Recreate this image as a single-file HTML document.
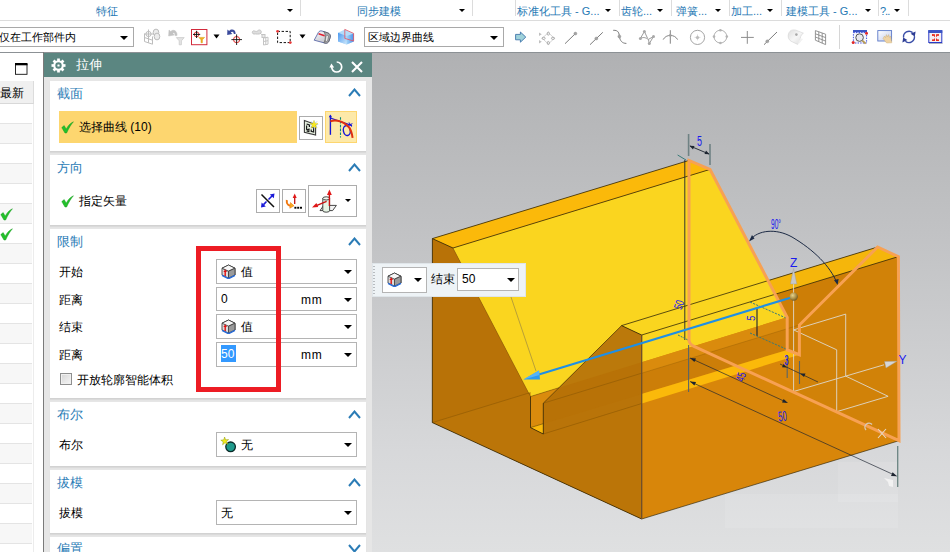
<!DOCTYPE html>
<html lang="zh">
<head>
<meta charset="utf-8">
<title>NX Extrude</title>
<style>
html,body{margin:0;padding:0;}
body{width:950px;height:552px;overflow:hidden;background:#fff;position:relative;font-family:"Liberation Sans",sans-serif;font-size:12px;color:#000;}
.abs{position:absolute;}
.t{position:absolute;white-space:nowrap;line-height:16px;height:16px;}
/* top tab strip */
#tabs{left:0;top:0;width:950px;height:20px;background:#fff;border-bottom:1px solid #dcdcdc;}
.tab{color:#2678b4;font-size:11px;}
.vd{position:absolute;top:0;width:1px;height:16px;background:#dcdcdc;}
.dd{position:absolute;width:0;height:0;border-left:4px solid transparent;border-right:4px solid transparent;border-top:4px solid #000;margin-left:-0.4px;}
.dds{position:absolute;width:0;height:0;border-left:3px solid transparent;border-right:3px solid transparent;border-top:3px solid #000;margin-left:0.2px;}
/* toolbar */
#tb{left:0;top:21px;width:950px;height:31px;background:#fff;}
.combo{position:absolute;background:#fff;border:1px solid #a9a9a9;box-sizing:border-box;}
/* viewport */
#vp{left:372px;top:52px;width:578px;height:500px;background:linear-gradient(#b0b1b3 0%,#c3c4c6 40%,#d7d8da 80%,#dfe0e1 100%);border-top:1px solid #8c9195;box-sizing:border-box;}
/* left strip */
#lp{left:0;top:53px;width:43px;height:499px;background:#fff;}
.row{position:absolute;left:0;width:32px;height:19px;border-bottom:1px solid #e4e4e4;}
/* dialog */
#dlg{left:43px;top:52px;width:329px;height:500px;background:#e6e6e6;border-left:1px solid #7a7a7a;box-sizing:border-box;}
#hdr{left:44px;top:52px;width:328px;height:25px;background:#5b8681;border-top:1px solid #8c9195;box-sizing:border-box;}
.sec{position:absolute;left:50px;width:316px;background:#fff;box-shadow:0 1px 0 #d2d2d2,0 2px 1px #dadada;}
.sl{color:#2b7cb6;font-size:13px;}
.la{letter-spacing:0;}
.btn{position:absolute;background:#fff;border:1px solid #adadad;box-sizing:border-box;}
</style>
</head>
<body>
<!-- ===== top tab strip ===== -->
<div id="tabs" class="abs">
  <span class="t tab" style="left:96px;top:2.5px;">特征</span>
  <div class="dds" style="left:286.8px;top:8.8px;"></div>
  <div class="vd" style="left:300px;"></div>
  <span class="t tab" style="left:356.5px;top:2.5px;">同步建模</span>
  <div class="dds" style="left:458.4px;top:8.8px;"></div>
  <div class="vd" style="left:472px;"></div>
  <div class="vd" style="left:515px;"></div>
  <span class="t tab" style="left:517px;top:2.5px;">标准化工具<span class="la"> - G...</span></span>
  <div class="dds" style="left:604.8px;top:8.8px;"></div>
  <div class="vd" style="left:619px;"></div>
  <span class="t tab" style="left:621px;top:2.5px;">齿轮<span class="la">...</span></span>
  <div class="dds" style="left:656.8px;top:8.8px;"></div>
  <div class="vd" style="left:671px;"></div>
  <span class="t tab" style="left:676px;top:2.5px;">弹簧<span class="la">...</span></span>
  <div class="dds" style="left:714.8px;top:8.8px;"></div>
  <div class="vd" style="left:729px;"></div>
  <span class="t tab" style="left:731px;top:2.5px;">加工<span class="la">...</span></span>
  <div class="dds" style="left:766.8px;top:8.8px;"></div>
  <div class="vd" style="left:781px;"></div>
  <span class="t tab" style="left:786px;top:2.5px;">建模工具<span class="la"> - G...</span></span>
  <div class="dds" style="left:864.8px;top:8.8px;"></div>
  <div class="vd" style="left:878px;"></div>
  <span class="t tab" style="left:880px;top:2.5px;"><span class="la" style="letter-spacing:-1px;">?..</span></span>
  <div class="dds" style="left:893.8px;top:8.8px;"></div>
  <div class="vd" style="left:908px;"></div>
</div>

<!-- ===== toolbar ===== -->
<div id="tb" class="abs"></div>
<div class="combo" style="left:-2px;top:27px;width:136px;height:20px;"></div>
<span class="t" style="left:-1.5px;top:29px;font-size:11px;">仅在工作部件内</span>
<div class="dd" style="left:120.8px;top:35.8px;"></div>
<div class="combo" style="left:364px;top:27px;width:140px;height:20px;"></div>
<span class="t" style="left:367.5px;top:29px;font-size:11px;">区域边界曲线</span>
<div class="dd" style="left:490.6px;top:35.8px;"></div>
<svg class="abs" style="left:0;top:21px;" width="950" height="31" viewBox="0 21 950 31">
<!-- 1 gray move-object -->
<g stroke="#bdbdbd" stroke-width="1" fill="none">
  <path d="M148.5 29.5 L148.5 39 M144.5 34 L153 34"/><circle cx="148.5" cy="34" r="2.6"/>
  <path d="M144.5 33.5 L144.5 41.5 L152.5 44.2 L152.5 36.5 M144.5 37.5 L152.5 40.2 M148.5 35 L148.5 42.8"/>
  <ellipse cx="156" cy="32.5" rx="2.8" ry="3.4" fill="#ececec"/><ellipse cx="157" cy="36.5" rx="2.8" ry="3.4" fill="#ececec"/>
</g>
<!-- 2 gray undo + funnel -->
<path d="M177 35.6 C177.6 30.6 172.8 28.8 170.8 31.6 L169 30 L168.6 36 L174.4 35 L172.8 33.4 C173.8 32 175.4 33 175 35.6 Z" fill="#c2c2c2" stroke="#c2c2c2" stroke-width="0.5"/>
<path d="M176.4 37.6 L184.2 37.6 L181.4 40.8 L181.4 44.8 L179.2 44.8 L179.2 40.8 Z" fill="#e4e4e4" stroke="#c6c6c6" stroke-width="0.7"/>
<!-- 3 red box w/ crosshair + funnel -->
<rect x="191.5" y="29.5" width="15.4" height="15.2" fill="#fff" stroke="#d22a3c" stroke-width="1"/>
<circle cx="196.6" cy="34.4" r="2.4" fill="none" stroke="#e02020" stroke-width="0.9"/>
<path d="M196.6 30.8 L196.6 38 M193 34.4 L200.2 34.4" stroke="#111" stroke-width="1"/>
<path d="M198.8 37.4 L204.6 37.4 L202.4 39.8 L202.4 42.8 L201 42.8 L201 39.8 Z" fill="#f0b020" stroke="#d89a10" stroke-width="0.5"/>
<path d="M213.5 34.6 L219.5 34.6 L216.5 38.4 Z" fill="#000"/>
<!-- 5 blue undo + crosshair -->
<path d="M235.6 34 C236 29.2 231 28.4 229.2 31 L227.4 29.6 L227.2 35 L232.4 34 L230.8 32.6 C231.8 31.2 233.8 31.8 233.8 34 Z" fill="#3a4a9c"/>
<circle cx="236.6" cy="39.6" r="3.1" fill="none" stroke="#e01818" stroke-width="0.9"/>
<path d="M236.6 34.4 L236.6 45 M231.4 39.6 L242 39.6" stroke="#111" stroke-width="0.9"/>
<!-- 6 gray chain/hand -->
<g stroke="#c4c4c4" stroke-width="1" fill="none">
  <path d="M252.5 31.5 C254 29.5 256 33 258 30.5 C260 29 262 31 261 33 C259 35 256 33.5 254 34 C252.5 34 252 32.5 252.5 31.5 Z" fill="#dedede"/>
  <path d="M260 33 L264 36.5"/><rect x="262" y="34.5" width="3" height="3" fill="#e8e8e8"/>
  <path d="M263.5 38 L268 37.2 L268 44.2 L263.5 45 Z M263.5 41.5 L268 40.7 M265.8 37.6 L265.8 44.6"/>
</g>
<!-- 7 dashed rect -->
<rect x="277.6" y="31.4" width="12.6" height="11.2" fill="none" stroke="#111" stroke-width="1" stroke-dasharray="2.4 1.6"/>
<circle cx="277.6" cy="31.3" r="1.4" fill="#e83838"/><circle cx="290.3" cy="42.6" r="1.4" fill="#e83838"/>
<path d="M299.5 34.6 L305.5 34.6 L302.5 38.4 Z" fill="#000"/>
<!-- 9 rounded block w/ red stripe -->
<defs><linearGradient id="lf" x1="0" y1="0" x2="0.6" y2="1"><stop offset="0" stop-color="#fafafc"/><stop offset="1" stop-color="#c4c4cc"/></linearGradient></defs>
<path d="M314.2 40.2 L318.4 32.4 C319.2 31 320.6 30.6 322 31 L327.6 32.8 C329.8 33.6 330.8 35.4 330.2 37.4 L329 41 C328.4 42.6 327 43.4 325.4 43.2 Z" fill="url(#lf)" stroke="#4a5aa0" stroke-width="0.8"/>
<path d="M323.6 31.6 L327.6 32.8 C329.8 33.6 330.8 35.4 330.2 37.4 L329 41 C328.4 42.6 327 43.4 325.4 43.2 L323.8 42.8 C325 40.8 325.6 38 325.2 35.4 C325 33.6 324.4 32.4 323.6 31.6 Z" fill="#a8a8ae" stroke="#4a4a4a" stroke-width="0.6"/>
<path d="M326 36.4 C326.4 35.4 327.8 35.2 328.4 35.8 L327.6 41 L325.4 41.6 Z" fill="#f4f4f4" stroke="#555" stroke-width="0.5"/>
<path d="M318.6 33.8 L324.6 35.8" stroke="#e02030" stroke-width="1.5"/>
<!-- 10 blue cube -->
<defs><linearGradient id="cb1" x1="0" y1="0" x2="1" y2="1"><stop offset="0" stop-color="#4a98f0"/><stop offset="1" stop-color="#cfe8fb"/></linearGradient>
<linearGradient id="cb2" x1="0" y1="0" x2="1" y2="0"><stop offset="0" stop-color="#a4d4f8"/><stop offset="1" stop-color="#4a90e8"/></linearGradient></defs>
<path d="M338 32.8 L344.8 29.6 L353.8 33.4 L353.8 41.4 L346.6 44.6 L338 41.6 Z" fill="#b4dcfa"/>
<path d="M338 32.8 L346.6 36 L346.6 44.6 L338 41.6 Z" fill="url(#cb1)"/>
<path d="M346.6 36 L353.8 33.4 L353.8 41.4 L346.6 44.6 Z" fill="url(#cb2)"/>
<path d="M344.8 29.4 L353.6 33.4 L353.6 41 L344.8 38.4 Z" fill="none" stroke="#e8505e" stroke-width="0.8"/>
<!-- 11 blue arrow -->
<path d="M515.6 34.4 L520.4 34.4 L520.4 32 L525.8 37.1 L520.4 42.2 L520.4 39.8 L515.6 39.8 Z" fill="#9fd2da" stroke="#3f74aa" stroke-width="0.9"/>
<!-- 12 diamond -->
<g stroke="#a0a0a0" stroke-width="0.8" fill="none">
  <path d="M548.3 32.6 L554.4 38.3 L548.3 44 L542.2 38.3 Z" stroke="#c8c8c8"/>
  <ellipse cx="548.3" cy="33.6" rx="1.1" ry="1.6"/><ellipse cx="548.3" cy="43" rx="1.1" ry="1.6"/>
  <ellipse cx="543.6" cy="38.3" rx="1.6" ry="1.1"/><ellipse cx="553" cy="38.3" rx="1.6" ry="1.1"/>
</g>
<path d="M539 32.4 L541.8 34.2 L539 36 Z M539 40 L541.8 41.8 L539 43.6 Z" fill="#c0c0c0"/>
<!-- 13,14 lines -->
<g stroke="#7c7c7c" stroke-width="1" fill="none">
  <path d="M565 43.7 L575.2 33.8"/><path d="M590 44.7 L602.8 32.3"/>
  <path d="M613.2 30.3 C618.5 30 619 33 619.4 36.4 C620 40.6 622 43.4 626.4 43.4"/>
  <path d="M764 44.7 L777 32"/>
</g>
<circle cx="575.4" cy="33.6" r="1.5" fill="#a4a4a4" stroke="#8c8c8c" stroke-width="0.4"/>
<circle cx="596.3" cy="38.5" r="1.5" fill="#a4a4a4" stroke="#8c8c8c" stroke-width="0.4"/>
<circle cx="619.4" cy="36.4" r="1.5" fill="#a4a4a4" stroke="#8c8c8c" stroke-width="0.4"/>
<circle cx="767.3" cy="41.3" r="1.5" fill="#a4a4a4" stroke="#8c8c8c" stroke-width="0.4"/>
<!-- 16 polyline w/ dots -->
<g stroke="#909090" stroke-width="0.9" fill="none">
  <path d="M640.4 38.4 L644.4 31.5 L647.6 38.4 M640.4 38.4 C644 36.6 646 38 648.4 39.4 M648.4 39.4 L649.3 43.6 L653.5 36.5 M648.4 39.4 L653.5 36.5"/>
</g>
<g fill="#a8a8a8"><circle cx="640.4" cy="38.4" r="1.5"/><circle cx="644.4" cy="31.5" r="1.5"/><circle cx="649.3" cy="43.6" r="1.5"/><circle cx="653.5" cy="36.5" r="1.5"/></g>
<!-- 17 arc + vertical -->
<g stroke="#848484" stroke-width="1" fill="none"><path d="M670.3 30.2 L670.3 43.7"/><path d="M663.2 39.6 C666 34 674.6 34 677.6 39.6"/></g>
<circle cx="670.3" cy="35.4" r="1.3" fill="#a0a0a0"/>
<!-- 18 circle + center -->
<circle cx="697.5" cy="37.4" r="7.1" fill="none" stroke="#9a9a9a" stroke-width="0.9"/>
<circle cx="697.5" cy="37.4" r="1.5" fill="#b0b0b0"/><path d="M694.6 37.4 L700.4 37.4 M697.5 34.5 L697.5 40.3" stroke="#c0c0c0" stroke-width="0.6"/>
<!-- 19 circle + 4 dots -->
<circle cx="720.4" cy="36.6" r="6.4" fill="none" stroke="#aaaaaa" stroke-width="0.9"/>
<g fill="#b4b4b4"><circle cx="720.4" cy="30.2" r="1.3"/><circle cx="720.4" cy="43" r="1.3"/><circle cx="714" cy="36.6" r="1.3"/><circle cx="726.8" cy="36.6" r="1.3"/></g>
<!-- 20 plus -->
<path d="M747.3 31 L747.3 43.8 M741 37.4 L753.8 37.4" stroke="#8c8c8c" stroke-width="1"/>
<!-- 22 surface -->
<defs><linearGradient id="sf" x1="0" y1="0" x2="1" y2="1"><stop offset="0" stop-color="#dedede"/><stop offset="0.5" stop-color="#f6f6f6"/><stop offset="1" stop-color="#dcdcdc"/></linearGradient></defs>
<path d="M788.6 33.4 C790 30 793 29.4 796 30.2 L803.4 33.2 C800.6 34.8 800 37.6 800.4 41.2 L797.6 44.4 L791 41.2 C788.6 39.8 787.4 36.6 788.6 33.4 Z" fill="url(#sf)" stroke="#d4d4d4" stroke-width="0.6"/>
<path d="M800.4 38.2 L803 39 L798.6 44.2 L797.6 44.4 Z" fill="#f2f2f2"/>
<circle cx="796.4" cy="34.6" r="1.3" fill="#a8a8a8"/>
<!-- 23 grid -->
<g stroke="#8a8a8a" stroke-width="0.9" fill="none">
  <path d="M815.4 30.6 L825.6 34.2 L825.6 44.6 L815.4 40.2 Z"/>
  <path d="M818.8 31.8 L818.8 41.6 M822.2 33 L822.2 43.2 M815.4 33.8 L825.6 37.6 M815.4 37 L825.6 41.1"/>
</g>
<!-- separator -->
<rect x="839" y="25" width="1" height="24" fill="#d6d6d6"/>
<!-- 24 zoom -->
<rect x="853" y="30" width="14" height="2.4" fill="#3b55c4"/>
<rect x="853.4" y="32.6" width="13.2" height="10.4" fill="#f4f6fc" stroke="#2a3ad8" stroke-width="0.9" stroke-dasharray="1.4 1.2"/>
<circle cx="859.6" cy="37.6" r="3.8" fill="#e8e8ec" stroke="#555" stroke-width="1"/>
<path d="M862.4 40.6 L865.6 43.6" stroke="#b89a50" stroke-width="1.8"/>
<circle cx="866.5" cy="33.2" r="1.5" fill="#e02828"/><circle cx="853.2" cy="42.6" r="1.5" fill="#e02828"/>
<!-- 25 screen w/ hand -->
<defs><linearGradient id="scr" x1="0" y1="0" x2="1" y2="1"><stop offset="0" stop-color="#ffffff"/><stop offset="1" stop-color="#c2ccec"/></linearGradient></defs>
<rect x="877.8" y="30.6" width="13.8" height="10.4" fill="url(#scr)" stroke="#5a78c8" stroke-width="0.9"/>
<path d="M883 38.4 L884.6 36 L885.6 37.6 L886.4 34.6 L887.6 37 L888.6 34.6 L889.4 37.4 L890.6 36 L891.8 42.8 L886.6 43 Z" fill="#efd3a4" stroke="#c8a870" stroke-width="0.4"/>
<!-- 26 rotate -->
<g fill="none" stroke="#3a4ea8" stroke-width="1.4">
  <path d="M903.6 37.6 A5.5 5.5 0 0 1 912.6 32.6"/><path d="M914.4 36.2 A5.5 5.5 0 0 1 905.4 41.2"/>
</g>
<path d="M915.6 31.4 L914.8 36.4 L910.6 33.8 Z" fill="#2c3c94"/><path d="M902.4 42.4 L903.2 37.4 L907.4 40 Z" fill="#2c3c94"/>
<!-- 27 window red arrows -->
<rect x="928.8" y="30.7" width="13" height="11.8" fill="#f4f0f4" stroke="#2a3ac8" stroke-width="1"/>
<rect x="928.3" y="30.2" width="14" height="2.8" fill="#3b55c4"/>
<rect x="929" y="43" width="13.6" height="0.8" fill="#9aa0b0"/>
<g fill="#e83020"><path d="M932 34.2 L935 34.2 L935 37.2 Z M932 34.2 L932 35.8 L933.4 35.8 Z"/><path d="M939 34.2 L936 34.2 L936 37.2 Z"/><path d="M932 41 L935 41 L935 38 Z"/><path d="M939 41 L936 41 L936 38 Z"/>
<rect x="932" y="34.2" width="1.6" height="1.6"/><rect x="937.4" y="34.2" width="1.6" height="1.6"/><rect x="932" y="39.4" width="1.6" height="1.6"/><rect x="937.4" y="39.4" width="1.6" height="1.6"/></g>
</svg>


<div class="abs" style="left:0;top:52px;width:950px;height:1px;background:#8c9195;"></div>
<!-- ===== viewport ===== -->
<div id="vp" class="abs"></div>
<svg class="abs" style="left:0;top:0;" width="950" height="552" viewBox="0 0 950 552">
<rect x="725" y="494" width="173" height="34" fill="#fff" fill-opacity="0.10"/><rect x="838" y="462" width="60" height="40" fill="#fff" fill-opacity="0.10"/>
<polygon points="432.4,238.6 689.0,160.4 710.0,169.4 768.1,280.6 877.6,247.0 898.4,256.6 899.0,440.7 641.7,519.0 432.3,422.6" fill="#d8860a" />
<polygon points="453.0,248.0 710.0,169.4 787.2,317.3 530.5,396.5" fill="#fad51f" />
<polygon points="530.5,396.5 787.2,317.3 787.2,350.0 530.5,427.6" fill="#da8b0d" />
<polygon points="641.7,373.2 787.2,328.7 787.2,350.0 641.7,394.0" fill="#cc7e08" />
<polygon points="530.5,427.6 787.2,350.0 799.4,354.7 543.3,434.0" fill="#fbb90a" />
<polygon points="775.2,294.2 898.4,256.6 899.0,440.7 899.0,440.7" fill="#d18208" />
<polygon points="775.2,294.2 854.5,270.0 799.4,325.0 799.4,354.7 787.2,350.0 787.2,317.3" fill="#cd7e06" />
<polygon points="854.5,270.0 898.4,256.6 899.0,440.7 799.4,394.8 799.4,354.7 799.4,325.0" fill="#d18208" />
<polygon points="768.1,280.6 877.6,247.0 898.4,256.6 775.2,294.2" fill="#f5b60b" />
<polygon points="432.4,238.6 689.0,160.4 710.0,169.4 453.0,248.0" fill="#fbb90a" />
<polygon points="432.4,238.6 453.0,248.0 530.5,396.5 530.5,427.6 543.3,434.0 543.3,403.2 621.6,325.6 641.7,335.0 641.7,519.0 432.3,422.6" fill="#b87207" />
<polygon points="558.9,387.7 621.6,325.6 641.7,335.0 641.7,362.2" fill="#bb790b" />
<polygon points="641.7,394.0 641.7,403.5 543.3,434.0 543.3,423.7" fill="#b97409" />
<polygon points="432.3,422.6 530.5,392.5 530.5,427.6 543.3,434.0 641.7,403.5 641.7,519.0" fill="#bb7508" />
<line x1="432.3" y1="422.6" x2="530.5" y2="392.5" stroke="#5a3a00" stroke-width="0.8" stroke-opacity="0.35"/>
<line x1="543.3" y1="403.2" x2="641.7" y2="373.2" stroke="#5a3a00" stroke-width="0.8" stroke-opacity="0.35"/>
<line x1="543.3" y1="434.0" x2="641.7" y2="403.5" stroke="#5a3a00" stroke-width="0.8" stroke-opacity="0.35"/>
<line x1="641.7" y1="373.2" x2="799.4" y2="325.0" stroke="#5a3a00" stroke-width="0.7" stroke-opacity="0.3"/>
<line x1="432.4" y1="238.6" x2="689.0" y2="160.4" stroke="#2a2208" stroke-width="0.9" stroke-opacity="0.85"/>
<line x1="453.0" y1="248.0" x2="710.0" y2="169.4" stroke="#2a2208" stroke-width="0.9" stroke-opacity="0.85"/>
<line x1="432.4" y1="238.6" x2="453.0" y2="248.0" stroke="#2a2208" stroke-width="0.9" stroke-opacity="0.85"/>
<line x1="432.4" y1="238.6" x2="432.3" y2="422.6" stroke="#2a2208" stroke-width="0.9" stroke-opacity="0.85"/>
<line x1="432.3" y1="422.6" x2="641.7" y2="519.0" stroke="#2a2208" stroke-width="0.9" stroke-opacity="0.85"/>
<line x1="641.7" y1="519.0" x2="899.0" y2="440.7" stroke="#2a2208" stroke-width="0.9" stroke-opacity="0.7"/>
<line x1="453.0" y1="248.0" x2="530.5" y2="396.5" stroke="#2a2208" stroke-width="0.7" stroke-opacity="0.35"/>
<line x1="530.5" y1="396.5" x2="530.5" y2="427.6" stroke="#2a2208" stroke-width="0.9" stroke-opacity="0.85"/>
<line x1="530.5" y1="427.6" x2="543.3" y2="434.0" stroke="#2a2208" stroke-width="0.9" stroke-opacity="0.85"/>
<line x1="543.3" y1="434.0" x2="543.3" y2="403.2" stroke="#2a2208" stroke-width="0.9" stroke-opacity="0.85"/>
<line x1="543.3" y1="403.2" x2="621.6" y2="325.6" stroke="#2a2208" stroke-width="0.8" stroke-opacity="0.7"/>
<line x1="621.6" y1="325.6" x2="641.7" y2="335.0" stroke="#2a2208" stroke-width="0.9" stroke-opacity="0.85"/>
<line x1="641.7" y1="335.0" x2="641.7" y2="519.0" stroke="#6e4e2c" stroke-width="1.3" />
<line x1="621.6" y1="325.6" x2="877.6" y2="247.0" stroke="#2a2208" stroke-width="0.9" stroke-opacity="0.85"/>
<line x1="641.7" y1="335.0" x2="898.4" y2="256.6" stroke="#2a2208" stroke-width="0.9" stroke-opacity="0.85"/>
<line x1="530.5" y1="396.5" x2="558.9" y2="387.7" stroke="#2a2208" stroke-width="0.7" stroke-opacity="0.5"/>
<line x1="530.5" y1="427.6" x2="543.3" y2="423.7" stroke="#2a2208" stroke-width="0.7" stroke-opacity="0.6"/>
<g stroke="#ded8cc" stroke-width="1" fill="none" stroke-opacity="0.9">
<path d="M793.6 284 L793.6 391.5"/>
<path d="M793.6 329.9 L845.7 314.1 L845.7 376.1"/>
<path d="M793.6 329.9 L836.7 349.8 L836.7 411.7 L888.1 396.3 L845.7 376.1"/>
<path d="M793.6 391.5 L884 364.8"/>
</g>
<line x1="684.8" y1="160" x2="684.8" y2="340" stroke="#1c2430" stroke-width="0.9" />
<line x1="677.6" y1="155" x2="686" y2="160" stroke="#3a7a78" stroke-width="1" />
<line x1="678" y1="335" x2="690" y2="341" stroke="#3a7a78" stroke-width="1" stroke-dasharray="2 1"/>
<line x1="688.6" y1="134" x2="688.6" y2="156" stroke="#6f8284" stroke-width="1.6" />
<line x1="710" y1="144" x2="710" y2="165" stroke="#6f8284" stroke-width="1.6" />
<line x1="690" y1="146" x2="709" y2="154" stroke="#1c2430" stroke-width="0.9" />
<path d="M689.5 145.8 L694.5 146 L693 149.5 Z" fill="#1c2430"/><path d="M709.5 154.2 L704.5 154 L706 150.5 Z" fill="#1c2430"/>
<path d="M750 240 C758 230 776 228 792 237 C814 250 830 266 837 283" fill="none" stroke="#1c2a44" stroke-width="1"/>
<path d="M749 241.5 L754.5 238.6 L752 235 Z" fill="#1c2a44"/><path d="M837.6 285 L834 280 L838.6 279 Z" fill="#1c2a44"/>
<line x1="688.6" y1="345" x2="688.6" y2="392" stroke="#5a6468" stroke-width="1.1" />
<line x1="757" y1="308" x2="757" y2="336" stroke="#1c2430" stroke-width="1.1" />
<line x1="750" y1="302" x2="786" y2="318" stroke="#3a7a78" stroke-width="1" stroke-dasharray="2.2 1.2"/>
<line x1="750" y1="333" x2="786" y2="349" stroke="#3a7a78" stroke-width="1" stroke-dasharray="2.2 1.2"/>
<line x1="690" y1="358" x2="786" y2="402" stroke="#1c2430" stroke-width="0.8" stroke-opacity="0.85"/>
<path d="M690 358 L696 358.4 L694.4 362 Z" fill="#1c2430"/><path d="M788 403 L782 402.6 L783.6 399 Z" fill="#1c2430"/>
<line x1="690" y1="381.5" x2="896.5" y2="476" stroke="#1c2430" stroke-width="0.8" stroke-opacity="0.85"/>
<path d="M690 381.5 L696 381.9 L694.4 385.5 Z" fill="#1c2430"/><path d="M897 476.3 L891 475.9 L892.6 472.3 Z" fill="#1c2430"/>
<line x1="897.7" y1="446" x2="897.7" y2="487" stroke="#6a8482" stroke-width="1.3" />
<line x1="787.2" y1="356" x2="787.2" y2="378" stroke="#5a6468" stroke-width="1.1" />
<line x1="799.5" y1="361" x2="799.5" y2="384" stroke="#5a6468" stroke-width="1.1" />
<line x1="780" y1="364" x2="818" y2="382" stroke="#1c2430" stroke-width="0.8" stroke-opacity="0.85"/>
<path d="M787 367.4 L782 367.2 L783.4 364 Z" fill="#1c2430"/><path d="M800 373.4 L805.5 373.6 L804 377 Z" fill="#1c2430"/>
<path d="M689.0 340.0 L689.0 160.4 L710.0 169.4 L787.2 317.3 L787.2 350.0 L799.4 354.7 L799.4 325.0 L877.6 247.0 L898.4 256.6 L899.0 440.7 L694.0 346.3 Q689.0 344.0 689.0 340.0 Z" fill="none" stroke="#f7a153" stroke-width="3" stroke-linejoin="miter"/>
<line x1="511" y1="297" x2="536" y2="371" stroke="#a8923c" stroke-width="0.8" />
<line x1="538" y1="374.8" x2="793" y2="297" stroke="#1e8fe6" stroke-width="2.2" />
<path d="M523.5 379.6 L539 370.6 L540 379.6 Z" fill="#2a9af0"/><path d="M523.5 379.6 L539 370.6 L539.5 375 Z" fill="#58b4f6"/>
<path d="M793.6 268.5 L796.8 284 L790.4 284 Z" fill="#c8c8c8" stroke="#9a9a9a" stroke-width="0.4"/>
<defs><radialGradient id="gold" cx="0.38" cy="0.35" r="0.7"><stop offset="0" stop-color="#e8d48c"/><stop offset="0.6" stop-color="#a88c44"/><stop offset="1" stop-color="#6a5420"/></radialGradient></defs>
<circle cx="793.7" cy="296.6" r="4.2" fill="url(#gold)"/>
<path d="M897 361.2 L884.5 361.6 L886 368 Z" fill="#d6d6d6" stroke="#9a9a9a" stroke-width="0.4"/>
<path d="M878 429 L886 438 M886 429 L878 438" stroke="#e8d8c8" stroke-width="1.1" fill="none"/>
<path d="M866 430 A4 4 0 0 1 872 424.5" stroke="#d8c8b8" stroke-width="1.4" fill="none"/>
<text x="699.6" y="146" font-family="Liberation Sans, sans-serif" font-size="14" fill="#1a1aee" text-anchor="middle" textLength="5" lengthAdjust="spacingAndGlyphs">5</text>
<text x="776" y="229" font-family="Liberation Sans, sans-serif" font-size="14" fill="#1a1aee" text-anchor="middle" textLength="10" lengthAdjust="spacingAndGlyphs">90°</text>
<text x="793.6" y="267.2" font-family="Liberation Sans, sans-serif" font-size="12" fill="#1a1aee" text-anchor="middle" >Z</text>
<text x="902.6" y="364.4" font-family="Liberation Sans, sans-serif" font-size="12" fill="#1a1aee" text-anchor="middle" >Y</text>
<text x="683" y="306" font-family="Liberation Sans, sans-serif" font-size="12" fill="#1a1aee" text-anchor="middle" transform="rotate(-72 683 306)" textLength="9" lengthAdjust="spacingAndGlyphs">50</text>
<text x="755" y="318.5" font-family="Liberation Sans, sans-serif" font-size="12" fill="#1a1aee" text-anchor="middle" transform="rotate(-85 755 318.5)" textLength="5" lengthAdjust="spacingAndGlyphs">5</text>
<text x="745" y="378" font-family="Liberation Sans, sans-serif" font-size="12" fill="#1a1aee" text-anchor="middle" transform="rotate(-75 745 378)" textLength="9" lengthAdjust="spacingAndGlyphs">45</text>
<text x="783" y="421" font-family="Liberation Sans, sans-serif" font-size="14" fill="#1a1aee" text-anchor="middle" transform="rotate(-6 783 421)" textLength="8.5" lengthAdjust="spacingAndGlyphs">50</text>
<text x="786.6" y="365" font-family="Liberation Sans, sans-serif" font-size="14" fill="#1a1aee" text-anchor="middle" textLength="4.5" lengthAdjust="spacingAndGlyphs">3</text>
<path d="M884 478 L893 480 L893 487 L889 486 L888 482 Z" fill="#f4f4f4" fill-opacity="0.9"/>
</svg>

<!-- ===== left strip ===== -->
<div id="lp" class="abs"></div>

<svg class="abs" style="left:14.6px;top:63px;" width="13" height="12" viewBox="0 0 13 12"><rect x="0.5" y="1.5" width="11.5" height="9.8" fill="#fff" stroke="#111" stroke-width="0.9"/><rect x="0" y="0" width="12.5" height="2.3" fill="#000"/></svg>
<div class="abs" style="left:0;top:81px;width:33px;height:22px;background:#f0f0f0;border-right:1px solid #dcdcdc;border-bottom:1px solid #d8d8d8;box-sizing:content-box;"></div>
<span class="t" style="left:-0.5px;top:85px;">最新</span>
<div class="row" style="top:104px;background:#fff;"></div>
<div class="row" style="top:124px;background:#f7f7f7;"></div>
<div class="row" style="top:144px;background:#fff;"></div>
<div class="row" style="top:164px;background:#f7f7f7;"></div>
<div class="row" style="top:184px;background:#fff;"></div>
<div class="row" style="top:204px;background:#f7f7f7;"></div>
<div class="row" style="top:224px;background:#fff;"></div>
<div class="row" style="top:244px;background:#f7f7f7;"></div>
<div class="row" style="top:264px;background:#fff;"></div>
<div class="row" style="top:284px;background:#f7f7f7;"></div>
<div class="row" style="top:304px;background:#fff;"></div>
<div class="row" style="top:324px;background:#f7f7f7;"></div>
<div class="row" style="top:344px;background:#fff;"></div>
<div class="row" style="top:364px;background:#f7f7f7;"></div>
<div class="row" style="top:384px;background:#fff;"></div>
<div class="row" style="top:404px;background:#f7f7f7;"></div>
<div class="row" style="top:424px;background:#fff;"></div>
<div class="row" style="top:444px;background:#f7f7f7;"></div>
<div class="row" style="top:464px;background:#fff;"></div>
<div class="row" style="top:484px;background:#f7f7f7;"></div>
<div class="row" style="top:504px;background:#fff;"></div>
<div class="row" style="top:524px;background:#f7f7f7;"></div>
<div class="row" style="top:544px;background:#fff;"></div>
<svg class="abs ck" style="left:0px;top:208px;" width="13" height="13" viewBox="0 0 13 13"><path d="M0.8 6.6 L3.2 4.6 L5.2 8.2 C7 4.6 9.6 2 12.4 0.8 C10 3.6 7.6 7.4 5.6 12 L4 12 Z" fill="#22c12a" stroke="#189a1e" stroke-width="0.5"/></svg>
<svg class="abs ck" style="left:0px;top:228px;" width="13" height="13" viewBox="0 0 13 13"><path d="M0.8 6.6 L3.2 4.6 L5.2 8.2 C7 4.6 9.6 2 12.4 0.8 C10 3.6 7.6 7.4 5.6 12 L4 12 Z" fill="#22c12a" stroke="#189a1e" stroke-width="0.5"/></svg>
<div class="abs" style="left:33px;top:104px;width:1px;height:448px;background:#ececec;"></div>


<!-- ===== dialog ===== -->
<div id="dlg" class="abs"></div>
<div id="hdr" class="abs"></div>
<!-- header -->
<svg class="abs" style="left:50.4px;top:57.3px;" width="17" height="17" viewBox="-8.5 -8.5 17 17">
  <g fill="#fff">
    <circle r="5.3"/>
    <rect x="-1.35" y="-7" width="2.7" height="14"/>
    <rect x="-1.35" y="-7" width="2.7" height="14" transform="rotate(45)"/>
    <rect x="-1.35" y="-7" width="2.7" height="14" transform="rotate(90)"/>
    <rect x="-1.35" y="-7" width="2.7" height="14" transform="rotate(135)"/>
  </g>
  <circle r="3.2" fill="#5b8681"/>
  <rect x="-1.1" y="-1.1" width="2.2" height="2.2" rx="0.5" fill="#fff"/>
</svg>
<span class="t" style="left:76px;top:57px;color:#fff;font-size:13px;">拉伸</span>
<svg class="abs" style="left:329px;top:58px;" width="16" height="16" viewBox="0 0 16 16">
  <path d="M7.7 4 A5 5 0 1 1 2.7 9" fill="none" stroke="#fff" stroke-width="1.7"/>
  <path d="M0.4 9.4 L5.2 9.4 L2.4 5.4 Z" fill="#fff"/>
</svg>
<svg class="abs" style="left:350.5px;top:60.6px;" width="12" height="12" viewBox="0 0 12 12">
  <path d="M1 1 L11 11 M11 1 L1 11" stroke="#fff" stroke-width="2.1" fill="none"/>
</svg>

<!-- section 1: 截面 -->
<div class="sec" style="top:81px;height:70px;"></div>
<span class="t sl" style="left:57px;top:86px;">截面</span>
<svg class="abs" style="left:348px;top:88px;" width="13" height="9" viewBox="0 0 13 9"><path d="M1 8 L6.5 1.5 L12 8" fill="none" stroke="#2b7cb6" stroke-width="2"/></svg>
<div class="abs" style="left:59px;top:111px;width:238px;height:32px;background:#fdd66f;"></div>
<svg class="abs ck" style="left:61px;top:121px;" width="13" height="13" viewBox="0 0 13 13"><path d="M0.8 6.6 L3.2 4.6 L5.2 8.2 C7 4.6 9.6 2 12.4 0.8 C10 3.6 7.6 7.4 5.6 12 L4 12 Z" fill="#22c12a" stroke="#189a1e" stroke-width="0.5"/></svg>
<span class="t" style="left:79px;top:119px;">选择曲线 (10)</span>
<div class="btn" style="left:299px;top:116px;width:24px;height:24px;"></div>
<svg class="abs" style="left:303px;top:119px;" width="18" height="18" viewBox="0 0 18 18">
  <path d="M1.4 1.6 L12.6 5.6 L12.6 16 L1.4 13.2 Z" fill="#e4eede" stroke="#3a3a3a" stroke-width="1.1"/>
  <path d="M3.6 5 L6.4 6 L6.4 8 M3.6 6.6 L3.6 10.4 L6 11 L6 9.4 M8.4 8 L10.6 8.8 L10.6 13 L8.2 12.4 L8.2 10.6 M3.6 11.8 L6.4 12.6" fill="none" stroke="#1a1a1a" stroke-width="1.2"/>
  <path d="M11 1.2 L11 9.6 M6.8 5.4 L15.2 5.4 M8 2.4 L14 8.4 M14 2.4 L8 8.4" stroke="#8ab4e8" stroke-width="0.7"/>
  <path d="M11 1.6 L12 4.4 L15 4.4 L12.6 6.2 L13.6 9.2 L11 7.4 L8.4 9.2 L9.4 6.2 L7 4.4 L10 4.4 Z" fill="#f8ea20" stroke="#d8c400" stroke-width="0.3"/>
</svg>
<div class="abs" style="left:325px;top:111px;width:32px;height:32px;background:#fde9a9;border:1px solid #fdd66f;box-sizing:border-box;"></div>
<svg class="abs" style="left:327px;top:113px;" width="28" height="28" viewBox="0 0 28 28">
  <path d="M3.4 2.6 L3.4 21.8" stroke="#1414d8" stroke-width="1.4" fill="none"/>
  <path d="M3.4 1.6 L5 4.2 L1.8 4.2 Z" fill="#1414d8"/>
  <path d="M13.5 4.2 L13.5 24.4" stroke="#0a8a7a" stroke-width="1.1" stroke-dasharray="2.6 1.2" fill="none"/>
  <path d="M3.4 5 L25 12.6" stroke="#1414d8" stroke-width="1.2" fill="none"/>
  <path d="M22 9.4 L24.6 13.6 M21.4 12.6 L25.4 10.6" stroke="#1414d8" stroke-width="1" fill="none"/>
  <ellipse cx="19.8" cy="17.6" rx="3.4" ry="5" transform="rotate(-12 19.8 17.6)" fill="none" stroke="#1414d8" stroke-width="1.4"/>
  <path d="M3.3 8.4 C6 7.4 8.6 7.4 10.6 7.8 C15 8.6 19.4 11.2 22.3 14.7 C24.2 17.4 25 21 25.6 24.8" stroke="#e0300e" stroke-width="2" fill="none"/>
</svg>

<!-- section 2: 方向 -->
<div class="sec" style="top:155px;height:70px;"></div>
<span class="t sl" style="left:57px;top:160px;">方向</span>
<svg class="abs" style="left:348px;top:163px;" width="13" height="9" viewBox="0 0 13 9"><path d="M1 8 L6.5 1.5 L12 8" fill="none" stroke="#2b7cb6" stroke-width="2"/></svg>
<svg class="abs ck" style="left:61px;top:195px;" width="13" height="13" viewBox="0 0 13 13"><path d="M0.8 6.6 L3.2 4.6 L5.2 8.2 C7 4.6 9.6 2 12.4 0.8 C10 3.6 7.6 7.4 5.6 12 L4 12 Z" fill="#22c12a" stroke="#189a1e" stroke-width="0.5"/></svg>
<span class="t" style="left:79px;top:193px;">指定矢量</span>
<div class="btn" style="left:256px;top:189px;width:24px;height:24px;"></div>
<svg class="abs" style="left:259px;top:192px;" width="18" height="18" viewBox="0 0 18 18">
  <path d="M2.5 2.5 L15 15" stroke="#111" stroke-width="1.5"/>
  <path d="M9.5 7.5 L13 4" stroke="#1a1ad8" stroke-width="1.6"/><path d="M15.5 1.5 L14.8 6.2 L10.8 2.4 Z" fill="#1a1ad8"/>
  <path d="M7.5 9.5 L4.5 12.6" stroke="#1a1ad8" stroke-width="1.6"/><path d="M2 15.5 L2.6 10.6 L6.8 14.6 Z" fill="#1a1ad8"/>
</svg>
<div class="btn" style="left:282px;top:189px;width:24px;height:24px;"></div>
<svg class="abs" style="left:285px;top:191px;" width="19" height="20" viewBox="0 0 19 20">
  <path d="M9.7 13 L9.7 6" stroke="#c01010" stroke-width="1.3"/><path d="M9.7 2.6 L11.7 7 L7.7 7 Z" fill="#e01818"/>
  <path d="M1.8 9 C1.2 13.5 4 15 6.6 14.6" fill="none" stroke="#f07810" stroke-width="2"/>
  <path d="M5.4 11.6 L9 14.8 L4.8 17.2 Z" fill="#f8b020" stroke="#f07810" stroke-width="0.6"/>
  <rect x="9.4" y="15.8" width="2" height="1.9" fill="#000"/><rect x="12.2" y="15.8" width="2" height="1.9" fill="#000"/><rect x="15" y="15.8" width="2" height="1.9" fill="#000"/>
</svg>
<div class="btn" style="left:308px;top:185px;width:49px;height:32px;"></div>
<svg class="abs" style="left:311px;top:188px;" width="30" height="27" viewBox="0 0 30 27">
  <path d="M12.6 17.4 L25.4 17.4 L21.6 22.6 L9 22.6 Z" fill="#f4f4f4" stroke="#333" stroke-width="0.9"/>
  <path d="M11.8 10.4 L11.8 22.6 A3.4 1.6 0 0 0 18.6 22.6 L18.6 10.4 Z" fill="#e6f4e4" stroke="#333" stroke-width="0.9"/>
  <ellipse cx="15.2" cy="10.4" rx="3.4" ry="1.6" fill="#f4faf2" stroke="#333" stroke-width="0.9"/>
  <path d="M18.4 18 L18.4 6" stroke="#c81010" stroke-width="1.4"/><path d="M18.4 1.6 L20.8 7 L16 7 Z" fill="#e01818"/>
  <path d="M15.6 13.4 L6 17.4" stroke="#c81010" stroke-width="1.4"/><path d="M1 19.6 L5.4 15 L7.2 19 Z" fill="#e01818"/>
</svg>
<div class="dds" style="left:345.3px;top:198.8px;"></div>

<!-- section 3: 限制 -->
<div class="sec" style="top:229px;height:169px;"></div>
<span class="t sl" style="left:57px;top:234px;">限制</span>
<svg class="abs" style="left:348px;top:237px;" width="13" height="9" viewBox="0 0 13 9"><path d="M1 8 L6.5 1.5 L12 8" fill="none" stroke="#2b7cb6" stroke-width="2"/></svg>
<span class="t" style="left:59px;top:264px;">开始</span>
<span class="t" style="left:59px;top:292px;">距离</span>
<span class="t" style="left:59px;top:319px;">结束</span>
<span class="t" style="left:59px;top:347px;">距离</span>
<div class="combo" style="left:216px;top:259px;width:141px;height:25px;border-color:#b4b4b4;"></div>
<div class="combo" style="left:216px;top:287px;width:141px;height:24px;border-color:#b4b4b4;"></div>
<div class="combo" style="left:216px;top:314px;width:141px;height:25px;border-color:#b4b4b4;"></div>
<div class="combo" style="left:216px;top:342px;width:141px;height:25px;border-color:#b4b4b4;"></div>
<svg class="abs cube" style="left:221px;top:264px;" width="15" height="15" viewBox="0 0 15 15">
  <path d="M1 4.2 L7.5 1 L14 4.2 L14 11 L7.5 14.2 L1 11 Z" fill="#dcdcdc" stroke="#444" stroke-width="0.9"/>
  <path d="M1 4.2 L7.5 7.2 L14 4.2 M7.5 7.2 L7.5 14.2" fill="none" stroke="#444" stroke-width="0.9"/>
  <path d="M1 4.2 L7.5 1 L14 4.2 L7.5 7.2 Z" fill="#f6f6f6" stroke="#444" stroke-width="0.9"/>
  <path d="M7.5 7.2 L14 4.2 L14 11 L7.5 14.2 Z" fill="#9a9a9a" stroke="#444" stroke-width="0.9"/>
  <path d="M1 11.4 L7.5 14.6 L14 11.4" fill="none" stroke="#2a6cd8" stroke-width="1.6"/>
  <path d="M4.2 12 L4.2 7.4" stroke="#e01010" stroke-width="1.4"/><path d="M4.2 5.2 L6 8 L2.4 8 Z" fill="#e01010"/>
</svg>
<span class="t" style="left:241px;top:264px;">值</span>
<div class="dd" style="left:344px;top:270px;"></div>
<span class="t" style="left:221px;top:291px;">0</span>
<span class="t" style="left:301px;top:292px;letter-spacing:0.7px;">mm</span>
<div class="dd" style="left:344px;top:298px;"></div>
<svg class="abs cube" style="left:221px;top:319px;" width="15" height="15" viewBox="0 0 15 15">
  <path d="M1 4.2 L7.5 1 L14 4.2 L14 11 L7.5 14.2 L1 11 Z" fill="#dcdcdc" stroke="#444" stroke-width="0.9"/>
  <path d="M1 4.2 L7.5 1 L14 4.2 L7.5 7.2 Z" fill="#f6f6f6" stroke="#444" stroke-width="0.9"/>
  <path d="M7.5 7.2 L14 4.2 L14 11 L7.5 14.2 Z" fill="#9a9a9a" stroke="#444" stroke-width="0.9"/>
  <path d="M1 11.4 L7.5 14.6 L14 11.4" fill="none" stroke="#2a6cd8" stroke-width="1.6"/>
  <path d="M4.2 12 L4.2 7.4" stroke="#e01010" stroke-width="1.4"/><path d="M4.2 5.2 L6 8 L2.4 8 Z" fill="#e01010"/>
</svg>
<span class="t" style="left:241px;top:319px;">值</span>
<div class="dd" style="left:344px;top:325px;"></div>
<div class="abs" style="left:221px;top:345px;width:15px;height:17px;background:#3399ff;"></div>
<span class="t" style="left:221px;top:346px;color:#fff;">50</span>
<span class="t" style="left:301px;top:347px;letter-spacing:0.7px;">mm</span>
<div class="dd" style="left:344px;top:353px;"></div>
<div class="abs" style="left:60px;top:373px;width:12px;height:12px;box-sizing:border-box;border:1px solid #8e8f8f;background:linear-gradient(135deg,#d6d6d6,#f6f6f6);box-shadow:inset 0 0 0 1px #f0f0f0;"></div>
<span class="t" style="left:77px;top:372px;">开放轮廓智能体积</span>
<div class="abs" style="left:196px;top:246px;width:85px;height:146px;box-sizing:border-box;border:5px solid #ed1c24;"></div>

<!-- section 4: 布尔 -->
<div class="sec" style="top:402px;height:64px;"></div>
<span class="t sl" style="left:57px;top:407px;">布尔</span>
<svg class="abs" style="left:348px;top:410px;" width="13" height="9" viewBox="0 0 13 9"><path d="M1 8 L6.5 1.5 L12 8" fill="none" stroke="#2b7cb6" stroke-width="2"/></svg>
<span class="t" style="left:59px;top:437px;">布尔</span>
<div class="combo" style="left:216px;top:432px;width:141px;height:25px;border-color:#b4b4b4;"></div>
<svg class="abs" style="left:220px;top:436px;" width="17" height="17" viewBox="0 0 17 17">
  <circle cx="10.6" cy="10.8" r="4.8" fill="#1f9a8c" stroke="#0a2a28" stroke-width="1.3"/>
  <path d="M4.6 1 L5.6 3.8 L8.6 3.6 L6.4 5.6 L7.8 8.4 L5 6.8 L2.6 8.8 L3.2 5.8 L0.8 4.2 L3.8 3.8 Z" fill="#f4ea1a" stroke="#8a9a10" stroke-width="0.5"/>
</svg>
<span class="t" style="left:241px;top:437px;">无</span>
<div class="dd" style="left:344px;top:443px;"></div>

<!-- section 5: 拔模 -->
<div class="sec" style="top:470px;height:63px;"></div>
<span class="t sl" style="left:57px;top:475px;">拔模</span>
<svg class="abs" style="left:348px;top:478px;" width="13" height="9" viewBox="0 0 13 9"><path d="M1 8 L6.5 1.5 L12 8" fill="none" stroke="#2b7cb6" stroke-width="2"/></svg>
<span class="t" style="left:59px;top:505px;">拔模</span>
<div class="combo" style="left:216px;top:500px;width:141px;height:25px;border-color:#b4b4b4;"></div>
<span class="t" style="left:221px;top:505px;">无</span>
<div class="dd" style="left:344px;top:511px;"></div>

<!-- section 6: 偏置 -->
<div class="sec" style="top:537px;height:20px;"></div>
<span class="t sl" style="left:57px;top:541px;">偏置</span>
<svg class="abs" style="left:348px;top:544px;" width="13" height="9" viewBox="0 0 13 9"><path d="M1 1 L6.5 7.5 L12 1" fill="none" stroke="#2b7cb6" stroke-width="2"/></svg>

<div class="abs" style="left:372px;top:263px;width:154px;height:34px;background:#eef3f6;border:1px solid #dfe5e9;box-sizing:border-box;"></div>
<div class="abs" style="left:373px;top:266px;width:2px;height:28px;background:repeating-linear-gradient(#b8bcc0 0 1px,#eef3f6 1px 3px);"></div>
<div class="combo" style="left:382px;top:267px;width:45px;height:26px;border-color:#b4b4b4;"></div>
<svg class="abs cube" style="left:387px;top:272px;" width="15" height="15" viewBox="0 0 15 15">
  <path d="M1 4.2 L7.5 1 L14 4.2 L14 11 L7.5 14.2 L1 11 Z" fill="#dcdcdc" stroke="#444" stroke-width="0.9"/>
  <path d="M1 4.2 L7.5 1 L14 4.2 L7.5 7.2 Z" fill="#f6f6f6" stroke="#444" stroke-width="0.9"/>
  <path d="M7.5 7.2 L14 4.2 L14 11 L7.5 14.2 Z" fill="#9a9a9a" stroke="#444" stroke-width="0.9"/>
  <path d="M1 11.4 L7.5 14.6 L14 11.4" fill="none" stroke="#2a6cd8" stroke-width="1.6"/>
  <path d="M4.2 12 L4.2 7.4" stroke="#e01010" stroke-width="1.4"/><path d="M4.2 5.2 L6 8 L2.4 8 Z" fill="#e01010"/>
</svg>
<div class="dd" style="left:414px;top:278px;"></div>
<span class="t" style="left:431px;top:271px;">结束</span>
<div class="combo" style="left:457px;top:268px;width:62px;height:23px;border-color:#b4b4b4;"></div>
<span class="t" style="left:462px;top:271px;">50</span>
<div class="dd" style="left:507px;top:278px;"></div>


</body>
</html>
